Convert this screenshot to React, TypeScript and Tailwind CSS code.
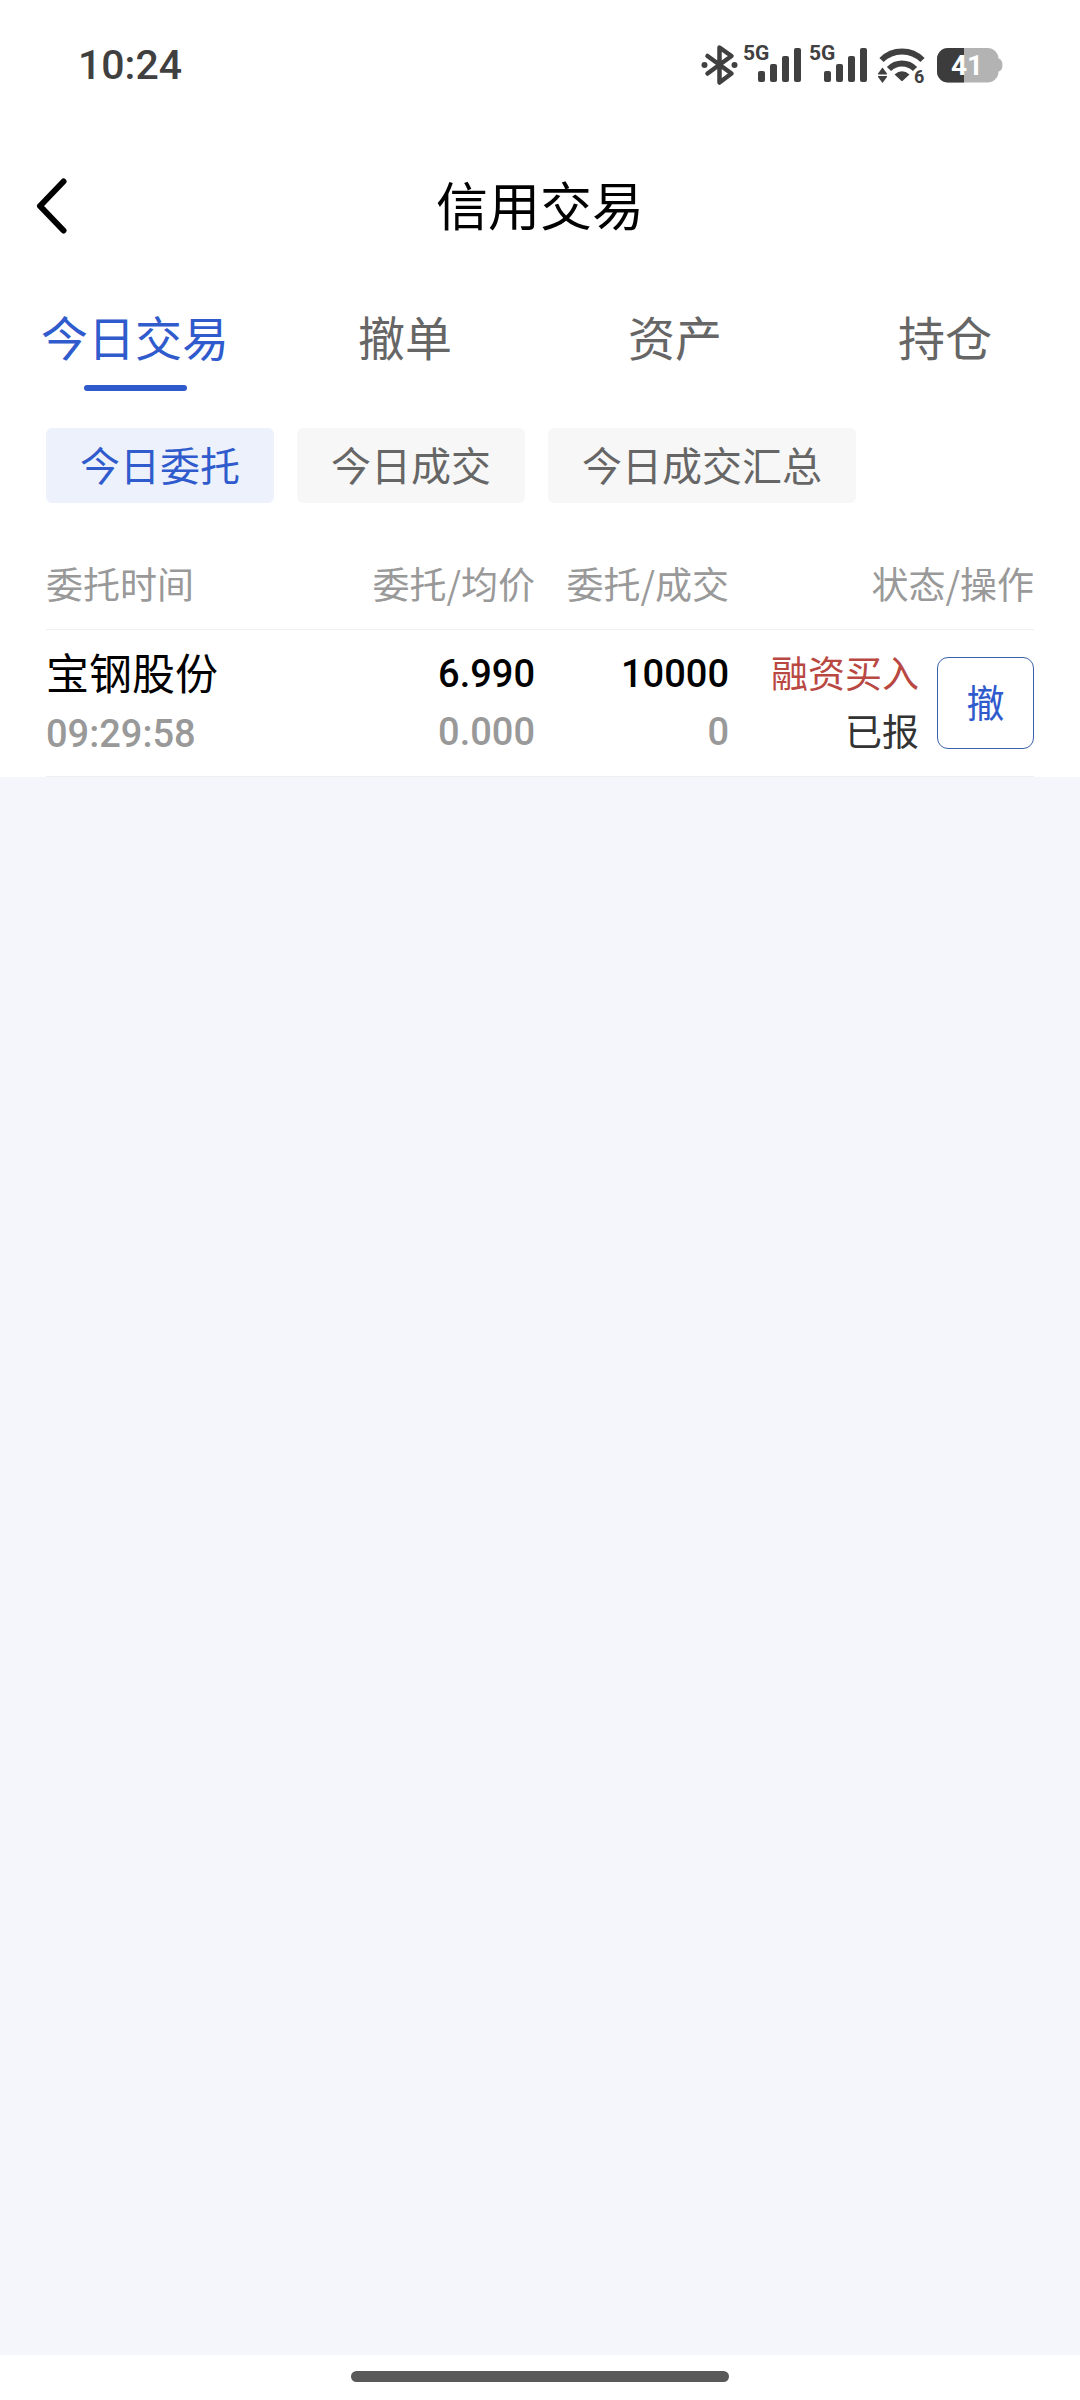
import { useState } from "react";

type Order = {
  name: string;
  time: string;
  price: string;
  avgPrice: string;
  quantity: string;
  filled: string;
  side: string;
  status: string;
};

const TABS = ["今日交易", "撤单", "资产", "持仓"];
const FILTERS = ["今日委托", "今日成交", "今日成交汇总"];
const ORDERS: Order[] = [
  {
    name: "宝钢股份",
    time: "09:29:58",
    price: "6.990",
    avgPrice: "0.000",
    quantity: "10000",
    filled: "0",
    side: "融资买入",
    status: "已报",
  },
];

function BluetoothIcon() {
  return (
    <svg width="38" height="42" viewBox="0 0 38 42" fill="none" aria-hidden="true">
      <path
        d="M6.5 12L30.5 29.5L18.5 38.5V3.5L30.5 12L6.5 29.5"
        stroke="#404040"
        strokeWidth="4.5"
        strokeLinecap="round"
        strokeLinejoin="round"
      />
      <circle cx="3.5" cy="21" r="3" fill="#404040" />
      <circle cx="33.5" cy="21" r="3" fill="#404040" />
    </svg>
  );
}

function SignalIcon() {
  return (
    <svg width="59" height="58" viewBox="0 -8 59 58" fill="#404040" aria-hidden="true">
      <text x="0" y="16" className="font-['Roboto'] text-[21px] font-bold">
        5G
      </text>
      <rect x="15" y="27" width="7" height="11" rx="2" />
      <rect x="27" y="20" width="7" height="18" rx="2" />
      <rect x="39" y="12" width="7" height="26" rx="2" />
      <rect x="51" y="4" width="7" height="34" rx="2" />
    </svg>
  );
}

function WifiIcon() {
  return (
    <svg width="48" height="58" viewBox="0 -8 48 58" fill="none" aria-hidden="true">
      <path d="M3.500 16A29 29 0 0 1 44.500 16" stroke="#404040" strokeWidth="6" />
      <path d="M11 25A18 18 0 0 1 37 25" stroke="#404040" strokeWidth="6" />
      <path d="M16.5 30.5Q24 24 31.5 30.5L25 36.5Q24 37.5 23 36.5Z" fill="#404040" />
      <path d="M4.5 23.5L9 29.5V30.5H0V29.5Z" fill="#404040" />
      <path d="M4.5 39L9 33V32H0V33Z" fill="#404040" />
      <text x="36" y="39" fill="#404040" className="font-['Roboto'] text-[18px] font-bold">
        6
      </text>
    </svg>
  );
}

function BatteryIcon() {
  return (
    <svg width="66" height="58" viewBox="0 -8 66 58" aria-hidden="true">
      <path d="M61 14.5H62Q65.500 16 65.500 21T62 27.500H61Z" fill="#b3b3b3" />
      <rect x="0" y="4" width="61.500" height="34.500" rx="11" fill="#b3b3b3" />
      <path d="M27 4H11A11 11 0 0 0 0 15V27.500A11 11 0 0 0 11 38.500H27Z" fill="#3c3c3c" />
      <text
        x="30"
        y="31"
        textAnchor="middle"
        fill="#ffffff"
        className="font-['Roboto'] text-[28px] font-bold"
      >
        41
      </text>
    </svg>
  );
}

function StatusBar() {
  return (
    <div className="flex h-[130px] items-center justify-between pr-[77px] pl-[78px]">
      <span className="font-['Roboto',sans-serif] text-[41px] leading-none font-medium text-[#404040]">
        10:24
      </span>
      <div className="flex items-center">
        <BluetoothIcon />
        <div className="ml-1 flex gap-[7px]">
          <SignalIcon />
          <SignalIcon />
        </div>
        <div className="ml-[10px] flex gap-[11px]">
          <WifiIcon />
          <BatteryIcon />
        </div>
      </div>
    </div>
  );
}

function TitleBar() {
  return (
    <header className="grid h-[152px] grid-cols-[1fr_auto_1fr] items-center px-9">
      <button type="button" aria-label="返回" className="justify-self-start">
        <svg width="32" height="56" viewBox="0 0 32 56" fill="none" aria-hidden="true">
          <path
            d="M27.500 3.500L4 28L27.500 52.500"
            stroke="#000000"
            strokeWidth="6"
            strokeLinecap="round"
            strokeLinejoin="round"
          />
        </svg>
      </button>
      <h1 className="pb-1 text-[52px] leading-none text-black">信用交易</h1>
    </header>
  );
}

function OrderTable({ orders }: { orders: Order[] }) {
  return (
    <table className="w-full table-fixed border-collapse">
      <colgroup>
        <col />
        <col className="w-[239px]" />
        <col className="w-[194px]" />
        <col className="w-[305px]" />
      </colgroup>
      <thead>
        <tr className="h-[90px] border-b border-[#f0f0f0] text-[37px] leading-none text-[#999999]">
          <th className="p-0 text-left font-normal">委托时间</th>
          <th className="p-0 text-right font-normal">委托/均价</th>
          <th className="p-0 text-right font-normal">委托/成交</th>
          <th className="p-0 text-right font-normal">状态/操作</th>
        </tr>
      </thead>
      <tbody>
        {orders.map((o) => (
          <tr key={o.name + o.time} className="h-[147px] border-b border-[#f0f0f0]">
            <td className="p-0">
              <div className="text-[43px] leading-[58px] text-black">{o.name}</div>
              <div className="mt-1 font-['Roboto',sans-serif] text-[38px] leading-[60px] font-medium text-[#999999]">
                {o.time}
              </div>
            </td>
            <td className="p-0 text-right font-['Roboto',sans-serif] text-[38px] leading-[58px] font-medium">
              <div className="text-black">{o.price}</div>
              <div className="text-[#999999]">{o.avgPrice}</div>
            </td>
            <td className="p-0 text-right font-['Roboto',sans-serif] text-[38px] leading-[58px] font-medium">
              <div className="text-black">{o.quantity}</div>
              <div className="text-[#999999]">{o.filled}</div>
            </td>
            <td className="p-0">
              <div className="flex items-center justify-end gap-[18px]">
                <div className="pb-1 text-right text-[37px] leading-[58px]">
                  <div className="text-[#b94843]">{o.side}</div>
                  <div className="text-[#333333]">{o.status}</div>
                </div>
                <button
                  type="button"
                  className="h-[92px] w-[97px] rounded-[11px] border border-[#3a62a8] pb-1 text-[38px] leading-none text-[#2f5bcc]"
                >
                  撤
                </button>
              </div>
            </td>
          </tr>
        ))}
      </tbody>
    </table>
  );
}

export default function App() {
  const [tab, setTab] = useState(TABS[0]);
  const [filter, setFilter] = useState(FILTERS[0]);

  return (
    <div className="flex min-h-screen flex-col bg-[#f4f6fb] font-['Noto_Sans_CJK_SC',sans-serif]">
      <div className="bg-white">
        <StatusBar />
        <TitleBar />
        <nav className="grid grid-cols-4">
          {TABS.map((t) => (
            <button
              key={t}
              type="button"
              onClick={() => setTab(t)}
              className={
                t === tab
                  ? "flex flex-col items-center pt-1 text-[47px] text-[#2f5bcc]"
                  : "flex flex-col items-center pt-1 text-[47px] text-[#666666]"
              }
            >
              <span className="leading-[99px]">{t}</span>
              <span
                className={
                  t === tab
                    ? "h-[6px] w-[103px] rounded-full bg-[#2f5bcc]"
                    : "h-[6px] w-[103px]"
                }
              />
            </button>
          ))}
        </nav>
        <div className="flex gap-[23px] px-[46px] pt-[37px] pb-[36px]">
          {FILTERS.map((f) => (
            <button
              key={f}
              type="button"
              onClick={() => setFilter(f)}
              className={
                f === filter
                  ? "h-[75px] rounded-md bg-[#edf1fc] px-[34px] pb-1 text-[40px] leading-none text-[#2f5bcc]"
                  : "h-[75px] rounded-md bg-[#f7f7f7] px-[34px] pb-1 text-[40px] leading-none text-[#666666]"
              }
            >
              {f}
            </button>
          ))}
        </div>
        <main className="px-[46px]">
          <OrderTable orders={ORDERS} />
        </main>
      </div>
      <div className="mt-auto flex h-[45px] justify-center bg-white pt-4">
        <div className="h-[11px] w-[35%] rounded-full bg-[#595959]" />
      </div>
    </div>
  );
}
